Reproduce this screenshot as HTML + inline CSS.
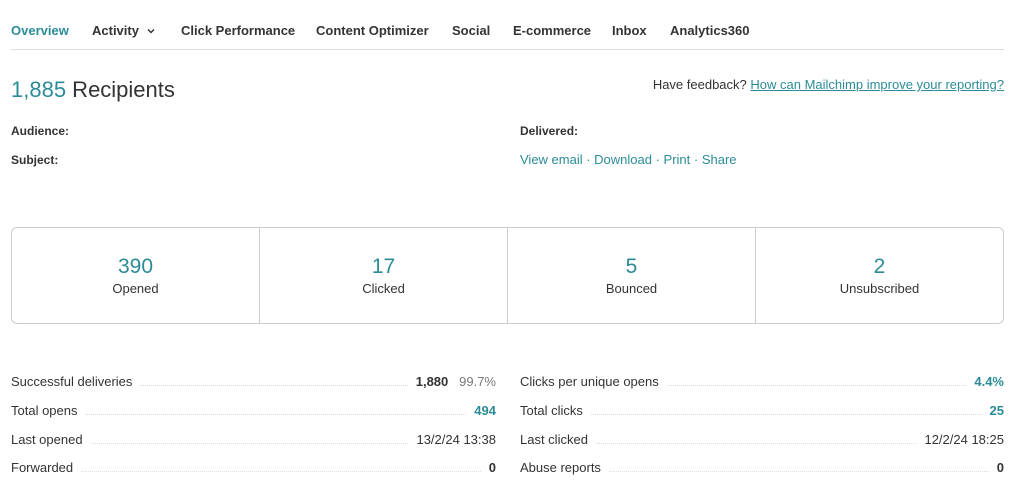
<!DOCTYPE html><html><head><style>
body{margin:0;background:#fff;font-family:"Liberation Sans",sans-serif;color:#333;width:1024px;height:489px;overflow:hidden;position:relative}
.a{position:absolute;white-space:nowrap}
.nav{font-size:13px;font-weight:bold;top:23px;color:#333}
.t{color:#2b8c98}
.nav.t{color:#2b8c98}
.box{position:absolute;left:11px;top:227px;width:991px;height:95px;border:1px solid #ccc;border-radius:6px;display:flex}
.box div{flex:1;border-right:1px solid #ccc;text-align:center}
.box div:last-child{border-right:0}
.box b{display:block;font-weight:normal;font-size:21px;color:#2b8c98;margin-top:27px;line-height:24px}
.box span{font-size:13px;display:block;margin-top:2px}
.row{position:absolute;font-size:13px;display:flex;align-items:baseline;height:16px}
.row .d{flex:1;border-bottom:1px dotted #ddd;margin:0 8px;height:10px}
</style></head><body>
<div class="a nav t" style="left:11px">Overview</div>
<div class="a nav" style="left:92px">Activity <svg width="8" height="6" viewBox="0 0 8 6" style="margin-left:4px;vertical-align:1px"><path d="M1 1.5L4 4.5L7 1.5" fill="none" stroke="#333" stroke-width="1.5"/></svg></div>
<div class="a nav" style="left:181px">Click Performance</div>
<div class="a nav" style="left:316px">Content Optimizer</div>
<div class="a nav" style="left:452px">Social</div>
<div class="a nav" style="left:513px">E-commerce</div>
<div class="a nav" style="left:612px">Inbox</div>
<div class="a nav" style="left:670px">Analytics360</div>
<div class="a" style="left:11px;top:49px;width:993px;border-top:1px solid #ddd"></div>
<div class="a" style="left:11px;top:77px;font-size:22px"><span class="t">1,885</span> Recipients</div>
<div class="a" style="right:20px;top:77px;font-size:13px">Have feedback? <span class="t" style="text-decoration:underline">How can Mailchimp improve your reporting?</span></div>
<div class="a" style="left:11px;top:124px;font-size:12px;font-weight:bold">Audience:</div>
<div class="a" style="left:11px;top:153px;font-size:12px;font-weight:bold">Subject:</div>
<div class="a" style="left:520px;top:124px;font-size:12px;font-weight:bold">Delivered:</div>
<div class="a t" style="left:520px;top:152px;font-size:13px">View email · Download · Print · Share</div>
<div class="box"><div><b>390</b><span>Opened</span></div><div><b>17</b><span>Clicked</span></div><div><b>5</b><span>Bounced</span></div><div><b>2</b><span>Unsubscribed</span></div></div>
<div class="row" style="left:11px;width:485px;top:374px">Successful deliveries<i class="d"></i><b>1,880</b>&nbsp;&nbsp;&nbsp;<span style="color:#777">99.7%</span></div>
<div class="row" style="left:11px;width:485px;top:403px">Total opens<i class="d"></i><b class="t">494</b></div>
<div class="row" style="left:11px;width:485px;top:432px">Last opened<i class="d"></i>13/2/24 13:38</div>
<div class="row" style="left:11px;width:485px;top:460px">Forwarded<i class="d"></i><b>0</b></div>
<div class="row" style="left:520px;width:484px;top:374px">Clicks per unique opens<i class="d"></i><b class="t">4.4%</b></div>
<div class="row" style="left:520px;width:484px;top:403px">Total clicks<i class="d"></i><b class="t">25</b></div>
<div class="row" style="left:520px;width:484px;top:432px">Last clicked<i class="d"></i>12/2/24 18:25</div>
<div class="row" style="left:520px;width:484px;top:460px">Abuse reports<i class="d"></i><b>0</b></div>
</body></html>
